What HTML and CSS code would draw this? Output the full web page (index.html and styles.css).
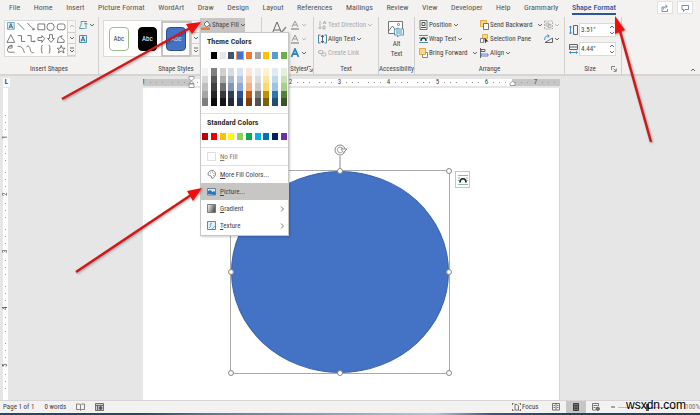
FILE: index.html
```
<!DOCTYPE html>
<html lang="en">
<head>
    <meta charset="UTF-8">
    <meta name="viewport" content="width=device-width, initial-scale=1.0">
    <title>Document - Word</title>
    <link rel="stylesheet" href="styles.css">
</head>
<body>
    <svg class="defs" width="0" height="0">
        <symbol id="chev" viewBox="0 0 6 6"><path d="M1 2l2 2 2-2" fill="none" stroke="currentColor" stroke-width=".8"/></symbol>
        <symbol id="up" viewBox="0 0 6 6"><path d="M1 4l2-2 2 2" fill="none" stroke="currentColor" stroke-width=".8"/></symbol>
        <symbol id="more" viewBox="0 0 6 6"><path d="M1 1h4M1 3l2 2 2-2" fill="none" stroke="currentColor" stroke-width=".8"/></symbol>
        <symbol id="launch" viewBox="0 0 6 6"><path d="M.5 4V.5H4M2.5 2.5L5 5M5.3 2.5v2.8H2.5" fill="none" stroke="currentColor" stroke-width=".8"/></symbol>
        <symbol id="textbox" viewBox="0 0 10 10"><path d="M1.5 1.5h7v7h-7z" fill="#e8f3fa" stroke="#4a93ab"/><path d="M3 7.5l2-5 2 5M3.7 6h2.6" fill="none" stroke="#24566b" stroke-width=".9"/></symbol>
    </svg>

    <header class="ribbon">
        <div class="tabbar">
            <nav class="tabs">
                <a href="#">File</a>
                <a href="#">Home</a>
                <a href="#">Insert</a>
                <a href="#">Picture Format</a>
                <a href="#">WordArt</a>
                <a href="#">Draw</a>
                <a href="#">Design</a>
                <a href="#">Layout</a>
                <a href="#">References</a>
                <a href="#">Mailings</a>
                <a href="#">Review</a>
                <a href="#">View</a>
                <a href="#">Developer</a>
                <a href="#">Help</a>
                <a href="#">Grammarly</a>
                <a href="#" class="active">Shape Format</a>
            </nav>
            <div class="share">
                <button aria-label="Share"><svg width="8" height="8" viewBox="0 0 8 8" fill="none" stroke="#5c7396" stroke-width=".8"><path d="M3 3H1v4.5h5.5V5M2.5 5.5c0-2 1-3 3-3M4.3.8l2 1.7-2 1.7"/></svg></button>
                <button aria-label="Comments"><svg width="8" height="8" viewBox="0 0 8 8" fill="none" stroke="#5c7396" stroke-width=".8"><path d="M1 1.5h6.5v4H4l-1.5 2v-2H1z"/></svg></button>
            </div>
        </div>

        <div class="groups">
            <section class="group insert">
                <div class="group-body">
                    <div class="gallery shapes">
                        <svg width="62" height="35" viewBox="0 0 64 36" fill="none" stroke="#555" stroke-width=".8">
                            <use href="#textbox" x="1" y="0" width="10" height="10"/>
                            <path d="M13 2l7 7M23 2l7 7M30 7v2h-2M34 3h7v6h-7z"/>
                            <circle cx="47" cy="6" r="3.8"/>
                            <rect x="54" y="3" width="8" height="6" rx="2"/>
                            <path d="M6 14l4 8H2zM13 15h4v6h4M23 15h4v6h4M30 20l1 1-1 1M34 17h4v-2l3 3-3 4v-2h-4zM46 14h3v4h2l-3.5 4-3.5-4h2zM55 17l4-2-1 2c0 2 3 1 3 3v2h-7z"/>
                            <path d="M8 25c-5 0-6 3-3 3s4-2 1-2-5 5-2 6 5-1 6 1M13 26c5 0 6 3 7 7M22 27c2-3 4 0 4 2s2 5 4 3M39 25c-2 0-1 2-1 3s-1 1-1 1 1 0 1 1-1 3 1 3M45 25c2 0 1 2 1 3s1 1 1 1-1 0-1 1 1 3-1 3M58 25l1 3h3l-2 2 1 3-3-2-3 2 1-3-2-2h3z"/>
                        </svg>
                        <div class="scroll">
                            <button aria-label="Scroll up" disabled><svg class="ico6"><use href="#up"/></svg></button>
                            <button aria-label="Scroll down"><svg class="ico6"><use href="#chev"/></svg></button>
                            <button aria-label="More shapes"><svg class="ico6"><use href="#more"/></svg></button>
                        </div>
                    </div>
                    <div class="stack">
                        <button class="cmd" aria-label="Edit Shape"><svg width="10" height="10" viewBox="0 0 10 10" fill="none" stroke="#4a93ab" stroke-width=".9"><path d="M3 1.5h6M3 1.5C4 5 2 6 1.5 8.5h5M8 3v6M6 4l2-1 1.5 1"/></svg><svg class="ico6"><use href="#chev"/></svg></button>
                        <button class="cmd" aria-label="Draw Text Box"><svg width="10" height="10"><use href="#textbox"/></svg></button>
                    </div>
                </div>
                <div class="group-foot"><span>Insert Shapes</span></div>
            </section>

            <section class="group styles">
                <div class="group-body">
                    <div class="gallery presets">
                        <button class="preset outline">Abc</button>
                        <button class="preset black">Abc</button>
                        <span class="picked"><button class="preset blue">Abc</button></span>
                        <div class="scroll">
                            <button aria-label="Scroll up" disabled><svg class="ico6"><use href="#up"/></svg></button>
                            <button aria-label="Scroll down"><svg class="ico6"><use href="#chev"/></svg></button>
                            <button aria-label="More styles"><svg class="ico6"><use href="#more"/></svg></button>
                        </div>
                    </div>
                    <div class="fill">
                        <button class="fill-btn">
                            <svg width="10" height="10" viewBox="0 0 10 10"><path d="M3 4l3-3 3 3.5-3.5 2.5z" fill="#fff" stroke="#555" stroke-width=".8"/><path d="M8 4c1 1 1.5 2 1 3" fill="none" stroke="#2e75b6"/><path d="M0 7.5h9V10H0z" fill="#ed7d31"/></svg>
                            Shape Fill
                            <svg class="ico6"><use href="#chev"/></svg>
                        </button>

                        <div class="menu">
                            <h2>Theme Colors</h2>
                            <div class="swatches">
                                <i class="white"></i><i class="ink"></i><i class="light"></i><i class="slate"></i><i class="azure on"></i><i class="orange"></i><i class="gray"></i><i class="gold"></i><i class="sky"></i><i class="green"></i>
                            </div>
                            <div class="shades">
                                <i class="s-white"></i><i class="s-ink"></i><i class="s-light"></i><i class="s-slate"></i><i class="s-azure"></i><i class="s-orange"></i><i class="s-gray"></i><i class="s-gold"></i><i class="s-sky"></i><i class="s-green"></i>
                            </div>
                            <hr>
                            <h2>Standard Colors</h2>
                            <div class="swatches">
                                <i class="darkred"></i><i class="red"></i><i class="amber"></i><i class="yellow"></i><i class="lime"></i><i class="emerald"></i><i class="cyan"></i><i class="blue"></i><i class="navy"></i><i class="purple"></i>
                            </div>
                            <hr>
                            <button class="item muted">
                                <svg width="9" height="9" viewBox="0 0 9 9"><path d="M.5.5h8v8h-8z" fill="#fff" stroke="#ddd"/></svg>
                                <span><u>N</u>o Fill</span>
                            </button>
                            <hr>
                            <button class="item">
                                <svg width="9" height="9" viewBox="0 0 9 9" fill="none" stroke="#666" stroke-width=".8"><path d="M5 8.5c-1-1 0-2-1-2.5s-3 0-3-2 2-3.5 4-3.5 3.5 1.5 3.5 3.5S7 7.5 5 8.5z"/><path d="M3 3h.8M5 2.2h.8M6.5 3.5h.8M6.3 5.5h.8"/></svg>
                                <span><u>M</u>ore Fill Colors...</span>
                            </button>
                            <button class="item hover">
                                <svg width="9" height="9" viewBox="0 0 9 9"><path d="M.5 1.5h8V8h-8z" fill="#d8ebf7" stroke="#46708c" stroke-width=".8"/><path d="M1 4l2.5-1 2 2L7 4l1.5 1.5V8L1 7z" fill="#2e75b6"/></svg>
                                <span><u>P</u>icture...</span>
                            </button>
                            <button class="item">
                                <svg width="9" height="9" viewBox="0 0 9 9"><linearGradient id="g" x2="1" y2=".4"><stop stop-color="#fff"/><stop offset="1" stop-color="#555"/></linearGradient><path d="M.5.5h8v8h-8z" fill="url(#g)" stroke="#666" stroke-width=".8"/></svg>
                                <span><u>G</u>radient</span>
                                <svg class="ico6 sub" viewBox="0 0 6 6"><path d="M2 .5L4.5 3 2 5.5" fill="none" stroke="#555" stroke-width=".8"/></svg>
                            </button>
                            <button class="item">
                                <svg width="9" height="9" viewBox="0 0 9 9"><path d="M.5.5h8v8h-8z" fill="#e4f1f7" stroke="#3a6f8a" stroke-width=".8"/><path d="M2 7l2-2-1-2 2-1M5 8l3-3" fill="none" stroke="#5b9bb5" stroke-width=".8"/></svg>
                                <span><u>T</u>exture</span>
                                <svg class="ico6 sub" viewBox="0 0 6 6"><path d="M2 .5L4.5 3 2 5.5" fill="none" stroke="#555" stroke-width=".8"/></svg>
                            </button>
                        </div>
                    </div>
                </div>
                <div class="group-foot"><span>Shape Styles</span></div>
            </section>

            <section class="group wordart">
                <div class="group-body">
                    <button class="quick" aria-label="Quick Styles"><svg width="18" height="20" viewBox="0 0 18 20" fill="none" stroke="#666"><path d="M2 14L7 2l5 12M4 10h6"/><path d="M11 13l5-6M8 15c1-2 2-2 3-2" stroke="#888" stroke-width="1.5"/></svg></button>
                    <div class="stack">
                        <button class="cmd" aria-label="Text Fill" disabled><svg width="10" height="10" viewBox="0 0 10 10" fill="none" stroke="#999"><path d="M2 7l3-6 3 6M3 5h4"/><path d="M1 9h8" stroke-width="1.5"/></svg><svg class="ico6"><use href="#chev"/></svg></button>
                        <button class="cmd" aria-label="Text Outline" disabled><svg width="10" height="10" viewBox="0 0 10 10" fill="none" stroke="#999"><path d="M2 7l3-6 3 6M3 5h4"/><path d="M1 9h8" stroke-width="1.5"/></svg><svg class="ico6"><use href="#chev"/></svg></button>
                        <button class="cmd" aria-label="Text Effects"><svg width="10" height="10" viewBox="0 0 10 10" fill="none" stroke="#2e86c1" stroke-width="1.8"><path d="M1.5 9L5 1l3.5 8M3 6h4"/></svg><svg class="ico6"><use href="#chev"/></svg></button>
                    </div>
                </div>
                <div class="group-foot"><span>WordArt Styles</span><button aria-label="Format text effects" disabled><svg class="ico6"><use href="#launch"/></svg></button></div>
            </section>

            <section class="group text">
                <div class="group-body">
                    <div class="stack">
                        <button class="cmd" disabled><svg width="9" height="10" viewBox="0 0 9 10" fill="none" stroke="currentColor" stroke-width=".9"><path d="M2 1v8M.5 7.5L2 9l1.5-1.5M5 4l1.5-3L8 4M5.5 3h2M5 6h2v3H5z"/></svg>Text Direction<svg class="ico6"><use href="#chev"/></svg></button>
                        <button class="cmd"><svg width="9" height="10" viewBox="0 0 9 10" fill="none" stroke="#2f7d9b" stroke-width=".9"><path d="M2.5 1h-2v8h2M6.5 1h2v8h-2"/><path d="M4.5 1v8M3.2 3l1.3-2 1.3 2M3.2 7l1.3 2 1.3-2" stroke="#555"/></svg>Align Text<svg class="ico6"><use href="#chev"/></svg></button>
                        <button class="cmd" disabled><svg width="9" height="10" viewBox="0 0 9 10" fill="none" stroke="currentColor" stroke-width=".9"><rect x=".5" y="2.5" width="4.5" height="3" rx="1.5"/><rect x="3.5" y="5" width="4.5" height="3" rx="1.5"/></svg>Create Link</button>
                    </div>
                </div>
                <div class="group-foot"><span>Text</span></div>
            </section>

            <section class="group access">
                <div class="group-body">
                    <button class="alt">
                        <svg width="17" height="18" viewBox="0 0 17 18" fill="none" stroke="#666" stroke-width=".9"><path d="M.5 1.5h14v12H.5z" fill="#fff"/><path d="M.5 11l4-5 3 4 2-2 5 4"/><circle cx="10.5" cy="4.5" r="1"/><path d="M6.5 9h9v6h-4l-2 2v-2h-3z" fill="#e6f4fa" stroke="#4a93b5"/><path d="M8 11h6M8 13h6" stroke="#4a93b5"/></svg>
                        <span>Alt<br>Text</span>
                    </button>
                </div>
                <div class="group-foot"><span>Accessibility</span></div>
            </section>

            <section class="group arrange">
                <div class="group-body">
                    <div class="stack">
                        <button class="cmd"><svg width="9" height="10" viewBox="0 0 9 10" fill="none" stroke="#666" stroke-width=".9"><path d="M1 .5h7v9H1z"/><path d="M3 2.5h3v3H3zM2 7.5h5" stroke="#444"/></svg>Position<svg class="ico6"><use href="#chev"/></svg></button>
                        <button class="cmd"><svg width="9" height="10" viewBox="0 0 9 10" fill="none" stroke="#3a87a8" stroke-width=".9"><path d="M0 1.5h9M0 8.5h9M0 4h2M7 4h2"/><path d="M2 7c0-4 5-4 5 0" stroke="#333" stroke-width="1.4"/></svg>Wrap Text<svg class="ico6"><use href="#chev"/></svg></button>
                        <button class="cmd wide"><svg width="9" height="10" viewBox="0 0 9 10" stroke-width=".8"><path d="M3.5 4.5h5v5h-5z" fill="#fff" stroke="#666"/><path d="M.5.5h6v6h-6z" fill="#fcd58a" stroke="#d99a2b"/></svg>Bring Forward<svg class="ico6"><use href="#chev"/></svg></button>
                    </div>
                    <div class="stack">
                        <button class="cmd wide"><svg width="9" height="10" viewBox="0 0 9 10" stroke-width=".8"><path d="M.5.5h6v6h-6z" fill="#fcd58a" stroke="#d99a2b"/><path d="M3.5 3.5h5v6h-5z" fill="#fff" stroke="#555"/></svg>Send Backward<svg class="ico6"><use href="#chev"/></svg></button>
                        <button class="cmd"><svg width="9" height="10" viewBox="0 0 9 10" stroke-width=".8"><path d="M2.5.5h5v4h-5z" fill="#fcd58a" stroke="#d99a2b"/><path d="M.5 4.5h3v4h-3z" fill="#fff" stroke="#666"/><path d="M4.5 3.5l4 4h-2l-1.5 2z" fill="#333"/></svg>Selection Pane</button>
                        <button class="cmd"><svg width="9" height="10" viewBox="0 0 9 10" fill="none" stroke-width=".9"><path d="M.5 0v10" stroke="#555"/><path d="M1 1.5h4v2H1z" stroke="#555"/><path d="M1 6h7v2H1z" stroke="#4472c4"/></svg>Align<svg class="ico6"><use href="#chev"/></svg></button>
                    </div>
                    <div class="stack">
                        <button class="cmd" aria-label="Group" disabled><svg width="9" height="10" viewBox="0 0 9 10" fill="none" stroke="currentColor" stroke-width=".9"><path d="M.5 1h8v8h-8z" stroke-dasharray="2 1"/><path d="M2 3h3v3H2zM4 4.5h3v3H4z"/></svg><svg class="ico6"><use href="#chev"/></svg></button>
                        <button class="cmd" aria-label="Rotate"><svg width="9" height="10" viewBox="0 0 9 10" fill="none" stroke-width=".9"><path d="M1 8.5h7.5V4z" stroke="#555"/><path d="M.8 6c-.5-3 1-4.500 4-4M3.5.5L5.300 2 3.5 3.600" stroke="#2e86c1"/></svg><svg class="ico6"><use href="#chev"/></svg></button>
                    </div>
                </div>
                <div class="group-foot"><span>Arrange</span></div>
            </section>

            <section class="group size">
                <div class="group-body">
                    <label class="dim">
                        <svg width="9" height="10" viewBox="0 0 9 10" fill="none" stroke-width=".9"><path d="M4.5.5h4v9h-4z" stroke="#555"/><path d="M1.500 1v8M.3 2.500L1.500 1l1.200 1.500M.3 7.500L1.500 9l1.200-1.500" stroke="#2e86c1"/></svg>
                        <input type="text" value='3.51"' aria-label="Shape height">
                        <span class="spin"><svg class="ico6"><use href="#up"/></svg><svg class="ico6"><use href="#chev"/></svg></span>
                    </label>
                    <label class="dim">
                        <svg width="9" height="10" viewBox="0 0 9 10" fill="none" stroke-width=".9"><path d="M.5.5h8v5h-8zM.5 3h8" stroke="#555"/><path d="M.5 8.5h8M2 7.300L.5 8.500 2 9.700M7 7.300l1.500 1.200L7 9.700" stroke="#2e86c1"/></svg>
                        <input type="text" value='4.44"' aria-label="Shape width">
                        <span class="spin"><svg class="ico6"><use href="#up"/></svg><svg class="ico6"><use href="#chev"/></svg></span>
                    </label>
                </div>
                <div class="group-foot"><span>Size</span><button aria-label="Advanced layout"><svg class="ico6"><use href="#launch"/></svg></button></div>
            </section>

            <button class="collapse" aria-label="Collapse the ribbon"><svg class="ico6"><use href="#up"/></svg></button>
        </div>
    </header>

    <main class="workspace">
        <div class="ruler-row">
            <button class="tabstop" aria-label="Tab stop">L</button>
            <div class="ruler">
                <span>1</span><span class="zero"></span><span>1</span><span>2</span><span>3</span><span>4</span><span>5</span><span>6</span><span>7</span>
                <svg class="indent" width="7" height="12" viewBox="0 0 7 12"><path d="M1 .5h5v2L3.5 5 1 2.5zM3.5 5L6 7.5H1zM1 8h5v3.5H1z" fill="#fff" stroke="#888" stroke-width=".8"/></svg>
                <svg class="indent right" width="7" height="12" viewBox="0 0 7 12"><path d="M3.5 5L6 7.5v2H1v-2z" fill="#fff" stroke="#888" stroke-width=".8"/></svg>
            </div>
        </div>
        <div class="canvas">
            <div class="vruler"><span>1</span><span>2</span><span>3</span><span>4</span><span>5</span></div>
            <article class="page">
                <div class="shape">
                    <div class="ellipse"></div>
                    <svg class="rotate" width="14" height="25" viewBox="0 0 14 25" fill="none" stroke="#888"><path d="M6 12v12"/><circle cx="6" cy="6" r="5" fill="#fff"/><path d="M8.5 7.5A2.8 2.8 0 1 1 8.8 5" stroke-width=".9"/><path d="M7 5h6L9.500 8.500z" fill="#fff" stroke-width=".9"/></svg>
                    <i class="dot nw"></i><i class="dot n"></i><i class="dot ne"></i><i class="dot w"></i><i class="dot e"></i><i class="dot sw"></i><i class="dot s"></i><i class="dot se"></i>
                    <button class="layout" aria-label="Layout Options"><svg width="12" height="14" viewBox="0 0 12 14" fill="none" stroke="#8ab8ad"><path d="M1 2.5h10M1 5h2M9 5h2M1 7.5h1M10 7.5h1M1 11.5h10"/><path d="M3 9.500c0-5 6-5 6 0" stroke="#222" stroke-width="1.700"/></svg></button>
                </div>
            </article>
        </div>
    </main>

    <footer class="status">
        <span>Page 1 of 1</span>
        <span>0 words</span>
        <svg width="9" height="8" viewBox="0 0 9 8" fill="none" stroke="#666" stroke-width=".8"><path d="M.5 1h3l1 1 1-1h3v5.5h-3l-1 1-1-1h-3zM4.5 2v5"/></svg>
        <svg width="9" height="8" viewBox="0 0 9 8" fill="none" stroke="#555" stroke-width=".8"><path d="M.5.5h8v7h-8z" fill="#ccc"/><path d="M.5 2.5h8M2.5 2.5v5"/><circle cx="5.5" cy="5" r="1.5" fill="#555"/></svg>
        <div class="views">
            <button class="focus"><svg width="9" height="8" viewBox="0 0 9 8" fill="none" stroke="#555" stroke-width=".8"><path d="M2.5 0h-2v2M6.500 0h2v2M.5 6v2h2M8.500 6v2h-2M3 1.500h2l1.500 1.500v4H3z"/></svg>Focus</button>
            <button aria-label="Read Mode"><svg width="8" height="8" viewBox="0 0 8 8" fill="none" stroke="#555" stroke-width=".8"><path d="M.5.5H4V7H.5zM4 .5h3.5V7H4M1.5 2.5H3M1.5 4.5H3M5 2.5h1.500M5 4.5h1.500"/></svg></button>
            <button class="current" aria-label="Print Layout"><svg width="8" height="8" viewBox="0 0 8 8" fill="none" stroke="#333" stroke-width=".9"><path d="M1.5.5h5v7h-5z" fill="#777"/><path d="M2.5 2.5h3M2.5 4h3M2.5 5.5h3"/></svg></button>
            <button aria-label="Web Layout"><svg width="8" height="8" viewBox="0 0 8 8" fill="none" stroke="#555" stroke-width=".8"><path d="M4 7H.5V.5h6V3M1.5 2.5h4M1.5 4.5h2"/><circle cx="5.8" cy="5.8" r="1.7" fill="#777"/></svg></button>
            <svg class="minus" width="4" height="2"><path d="M0 1h4" stroke="#555"/></svg>
            <input type="range" aria-label="Zoom" value="50">
            <span class="percent">100%</span>
        </div>
    </footer>
    <div class="taskbar"></div>
    <div class="watermark">wsxdn.com</div>

    <!-- callout arrows -->
    <svg class="arrows" width="700" height="415" viewBox="0 0 700 415">
        <g stroke="#d01818" stroke-width="2.5">
            <path d="M62 99L190 28"/>
            <path d="M76 272L191 195"/>
            <path d="M651 142L620 31"/>
        </g>
        <g fill="#ee0f0f">
            <path d="M201 22L186 24l6 10z"/>
            <path d="M202 188L187 191l6 10z"/>
            <path d="M615 16v18l10-4z"/>
        </g>
    </svg>
</body>
</html>
```
FILE: styles.css
```
*{
    padding: 0;
    margin: 0;
    box-sizing: border-box;
}
body{
    min-height: 100vh;
    display: flex;
    flex-direction: column;
    position: relative;
    overflow: hidden;
    background-color: #e6e6e6;
    color: #444;
    font: 7px/10px "Roboto Condensed", Roboto, sans-serif;
}
button, input{
    border: 0;
    background: none;
    color: inherit;
    font: inherit;
}
button:disabled{
    color: #aaa;
}
svg{
    display: block;
    flex: none;
}
.defs{
    position: absolute;
}
.ico6{
    width: 6px;
    height: 6px;
}

/* ribbon */
.ribbon{
    background-color: #f3f2f1;
    border-bottom: 2px solid #d5d5d5;
}
.tabbar{
    display: flex;
    justify-content: space-between;
    height: 17px;
    padding: 1px 7px 0 9px;
}
.tabs{
    display: flex;
    justify-content: space-between;
    width: calc(100% - 77px);
    font-size: 8px;
    line-height: 13px;
}
.tabs a{
    color: #555;
    text-decoration: none;
    white-space: nowrap;
    height: 14px;
}
.tabs .active{
    color: #2b579a;
    font-weight: 500;
    border-bottom: 2px solid #2b579a;
}
.share{
    display: flex;
    gap: 4px;
}
.share button{
    display: grid;
    place-items: center;
    width: 16px;
    height: 13px;
    background-color: #fff;
    border: 1px solid #e3e1df;
}
.groups{
    display: flex;
    height: 57px;
}
.group{
    display: flex;
    flex-direction: column;
    position: relative;
    border-right: 1px solid #d2d0ce;
    padding: 3px 4px 0;
}
.group-body{
    display: flex;
    flex: 1;
}
.group-foot{
    display: flex;
    align-items: center;
    height: 10px;
    white-space: nowrap;
}
.group-foot span{
    flex: 1;
    text-align: center;
}
.insert{ width: 99px; }
.styles{ width: 163px; }
.wordart{ width: 52px; }
.text{ width: 65px; }
.access{ width: 36px; padding: 3px 0 0; }
.arrange{ width: 150px; }
.size{ width: 57px; }

.gallery{
    display: flex;
    height: 37px;
    background-color: #fff;
    border: 1px solid #dcdad8;
}
.scroll{
    display: grid;
    grid-template-rows: repeat(3, 1fr);
    width: 8px;
    border-left: 1px solid #d2d0ce;
    background-color: #f6f5f4;
}
.scroll button{
    display: grid;
    place-items: center;
    border-bottom: 1px solid #d2d0ce;
}
.stack{
    display: flex;
    flex-direction: column;
    gap: 4px;
}
.cmd{
    display: flex;
    align-items: center;
    gap: 1px;
    height: 10px;
    white-space: nowrap;
}
.wide .ico6{
    margin-left: 4px;
}
.insert .stack{
    margin-left: 2px;
}
.presets{
    align-items: center;
    width: 97px;
    padding-left: 5px;
}
.presets .scroll{
    align-self: stretch;
    margin-left: auto;
}
.preset{
    width: 20px;
    height: 24px;
    border: 1px solid #000;
    border-radius: 4px;
    margin-right: 9px;
}
.preset.outline{
    border-color: #9dbb8b;
}
.preset.black{
    background-color: #000;
    color: #fff;
    margin-right: 4px;
}
.picked{
    border: 2px solid #c8c6c4;
    padding: 4px 3px;
}
.preset.blue{
    display: block;
    background-color: #4472c4;
    border-color: #2f528f;
    color: #dbe4f5;
    margin: 0;
}
.styles .group-foot{
    padding-right: 8px;
}
.wordart .group-body{
    padding-left: 4px;
}
.quick{
    align-self: flex-start;
}
.wordart .stack{
    padding-left: 2px;
}
.wordart .group-foot{
    padding: 0;
}
.group-foot button{
    color: #666;
}
.access .group-body{
    justify-content: center;
}
.alt{
    display: flex;
    flex-direction: column;
    align-items: center;
    gap: 1px;
}
.arrange .group-body{
    gap: 4px;
}
.arrange .stack:nth-child(1){
    width: 57px;
}
.arrange .stack:nth-child(2){
    width: 60px;
}
.size .group-body{
    flex-direction: column;
    gap: 5px;
    padding-top: 3px;
}
.dim{
    display: flex;
    align-items: center;
    gap: 1px;
    position: relative;
}
.dim input{
    width: 37px;
    height: 14px;
    padding-left: 1px;
    background-color: #fff;
    border: 1px solid #dcdad8;
}
.spin{
    position: absolute;
    right: 2px;
}
.collapse{
    align-self: flex-end;
    margin: 0 4px 1px auto;
    height: 6px;
}

/* shape fill dropdown */
.fill{
    position: relative;
}
.fill-btn{
    display: flex;
    align-items: center;
    gap: 1px;
    height: 14px;
    width: 45px;
    margin-top: -2px;
    padding-left: 1px;
    background-color: #c8c6c4;
    white-space: nowrap;
}
.menu{
    position: absolute;
    z-index: 2;
    top: 12px;
    left: 0;
    width: 89px;
    height: 204px;
    background-color: #fff;
    border: 1px solid #c6c6c6;
    box-shadow: 1px 1px 2px #0003;
}
.menu h2{
    height: 18px;
    padding-left: 6px;
    font-size: 8px;
    line-height: 18px;
    font-weight: 700;
    color: #333;
}
.menu hr{
    border: 0;
    border-top: 1px solid #e1e1e1;
}
.swatches, .shades{
    display: flex;
    justify-content: space-between;
    padding: 1px 1px 0;
}
.swatches i{
    width: 6px;
    height: 7px;
}
.swatches .on{
    outline: 1px solid #e0a080;
}
.swatches + hr{
    margin-top: 7px;
}
.shades{
    margin: 8px 0 7px;
}
.shades i{
    width: 6px;
    height: 38px;
}
.white{ background: #fff; }
.ink{ background: #000; }
.light{ background: #e7e6e6; }
.slate{ background: #44546a; }
.azure{ background: #4472c4; }
.orange{ background: #ed7d31; }
.gray{ background: #a5a5a5; }
.gold{ background: #ffc000; }
.sky{ background: #5b9bd5; }
.green{ background: #70ad47; }
.darkred{ background: #c00000; }
.red{ background: #f00000; }
.amber{ background: #ffc000; }
.yellow{ background: #ff0; }
.lime{ background: #92d050; }
.emerald{ background: #00b050; }
.cyan{ background: #00b0f0; }
.swatches .blue{ background: #0070c0; }
.navy{ background: #002060; }
.purple{ background: #7030a0; }
.s-white{ background: linear-gradient(#f2f2f2 20%, #d8d8d8 20% 40%, #bfbfbf 40% 60%, #a5a5a5 60% 80%, #7f7f7f 80%); }
.s-ink{ background: linear-gradient(#7f7f7f 20%, #595959 20% 40%, #3f3f3f 40% 60%, #262626 60% 80%, #0c0c0c 80%); }
.s-light{ background: linear-gradient(#d0cece 20%, #aeabab 20% 40%, #757070 40% 60%, #3a3838 60% 80%, #171616 80%); }
.s-slate{ background: linear-gradient(#d6dce4 20%, #adb9ca 20% 40%, #8496b0 40% 60%, #323f4f 60% 80%, #222a35 80%); }
.s-azure{ background: linear-gradient(#d9e2f3 20%, #b4c6e7 20% 40%, #8eaadb 40% 60%, #2f5496 60% 80%, #1f3864 80%); }
.s-orange{ background: linear-gradient(#fbe5d5 20%, #f7cbac 20% 40%, #f4b183 40% 60%, #c55a11 60% 80%, #833c0b 80%); }
.s-gray{ background: linear-gradient(#ededed 20%, #dbdbdb 20% 40%, #c9c9c9 40% 60%, #7b7b7b 60% 80%, #525252 80%); }
.s-gold{ background: linear-gradient(#fff2cc 20%, #fee599 20% 40%, #ffd965 40% 60%, #bf9000 60% 80%, #7f6000 80%); }
.s-sky{ background: linear-gradient(#deebf6 20%, #bdd7ee 20% 40%, #9cc3e5 40% 60%, #2e75b5 60% 80%, #1e4e79 80%); }
.s-green{ background: linear-gradient(#e2efd9 20%, #c5e0b3 20% 40%, #a8d08d 40% 60%, #538135 60% 80%, #375623 80%); }
.item{
    display: flex;
    align-items: center;
    gap: 4px;
    width: 100%;
    height: 17px;
    padding: 0 3px 0 6px;
    text-align: left;
}
.item.muted{
    color: #777;
}
.item.hover{
    background-color: #c8c6c4;
}
.sub{
    margin-left: auto;
}

/* document area */
.workspace{
    flex: 1;
    display: flex;
    flex-direction: column;
}
.ruler-row{
    display: flex;
    align-items: center;
    height: 12px;
    padding: 0 7px 0 3px;
}
.tabstop{
    width: 7px;
    height: 9px;
    background-color: #fafafa;
    line-height: 9px;
    font-weight: 700;
}
.ruler{
    display: flex;
    position: relative;
    width: 417px;
    height: 7px;
    margin: 0 auto;
    line-height: 7px;
    background: linear-gradient(90deg, #c6c6c6 48px, #fff 48px 369px, #c6c6c6 369px);
    clip-path: inset(-4px 0);
}
.ruler span{
    flex: none;
    display: flex;
    justify-content: center;
    gap: 1px;
    width: 49px;
}
.ruler span:first-child{
    margin-left: -24px;
}
.ruler span::before, .ruler span::after{
    content: "";
    flex: 1;
    background: linear-gradient(#999, #999) 3px 3px / 6px 1px;
    background: repeating-linear-gradient(90deg, transparent 0 4px, #999 4px 5px, transparent 5px 6px) 0 3px / auto 1px no-repeat;
}
.indent{
    position: absolute;
    top: -3px;
    left: 45px;
}
.indent.right{
    left: 366px;
}
.canvas{
    flex: 1;
    display: flex;
    padding: 0 5px 0 3px;
}
.vruler{
    width: 5px;
    padding-top: 21px;
    background-color: #fff;
}
.vruler span{
    display: flex;
    align-items: center;
    gap: 1px;
    width: 5px;
    height: 57px;
    line-height: 5px;
    writing-mode: vertical-rl;
    transform: rotate(180deg);
}
.vruler span::before, .vruler span::after{
    content: "";
    flex: 1;
    width: 1px;
    background: repeating-linear-gradient(transparent 0 5px, #999 5px 6px, transparent 6px 7px);
}
.page{
    width: 417px;
    margin: 0 auto;
    padding: 82px 87px 0;
    background-color: #fff;
    border-right: 1px solid #d5d5d5;
}
.shape{
    position: relative;
    width: 220px;
    height: 204px;
    border: 1px solid #aaa;
}
.ellipse{
    height: 100%;
    background-color: #4472c4;
    border: 1px solid #3862ac;
    border-radius: 50%;
}
.dot{
    position: absolute;
    width: 6px;
    height: 6px;
    margin: -3px;
    background-color: #fff;
    border: 1px solid #888;
    border-radius: 50%;
}
.nw{ top: 0; left: 0; }
.n{ top: 0; left: 50%; }
.ne{ top: 0; left: 100%; }
.w{ top: 50%; left: 0; }
.e{ top: 50%; left: 100%; }
.sw{ top: 100%; left: 0; }
.s{ top: 100%; left: 50%; }
.se{ top: 100%; left: 100%; }
.rotate{
    position: absolute;
    left: 103px;
    top: -27px;
}
.layout{
    position: absolute;
    left: 224px;
    top: 0;
    padding: 1px 0 0 1px;
    width: 15px;
    height: 17px;
    background-color: #fff;
    border: 1px solid #b5cdc6;
}

/* status bar */
.status{
    display: flex;
    align-items: center;
    gap: 10px;
    height: 13px;
    padding-left: 3px;
    background-color: #f3f2f1;
    border-top: 1px solid #d5d5d5;
}
.views{
    display: flex;
    align-items: center;
    margin-left: auto;
}
.views button{
    display: flex;
    align-items: center;
    justify-content: center;
    width: 20px;
    height: 12px;
}
.views .focus{
    gap: 1px;
    width: 26px;
    margin-right: 8px;
}
.views .current{
    background-color: #c8c6c4;
}
.minus{
    margin: 0 3px 0 5px;
}
.views input{
    appearance: none;
    width: 58px;
    height: 1px;
    margin-right: 9px;
    background-color: #bbb;
}
.views input::-webkit-slider-thumb{
    appearance: none;
    width: 3px;
    height: 7px;
    background-color: #555;
}
.percent{
    color: #777;
}
.taskbar{
    height: 2px;
    background: linear-gradient(90deg, #27476a 20%, #5f7891 30%, #b5c6da 62%, #46508a 70%, #24435e 80%);
}
.watermark{
    position: absolute;
    right: 14px;
    bottom: 3px;
    color: #000;
    font: 12px/14px "Liberation Sans", sans-serif;
}
.arrows{
    position: absolute;
    z-index: 3;
    top: 0;
    left: 0;
    pointer-events: none;
    filter: drop-shadow(1px 1px 1px #0005);
}
```
